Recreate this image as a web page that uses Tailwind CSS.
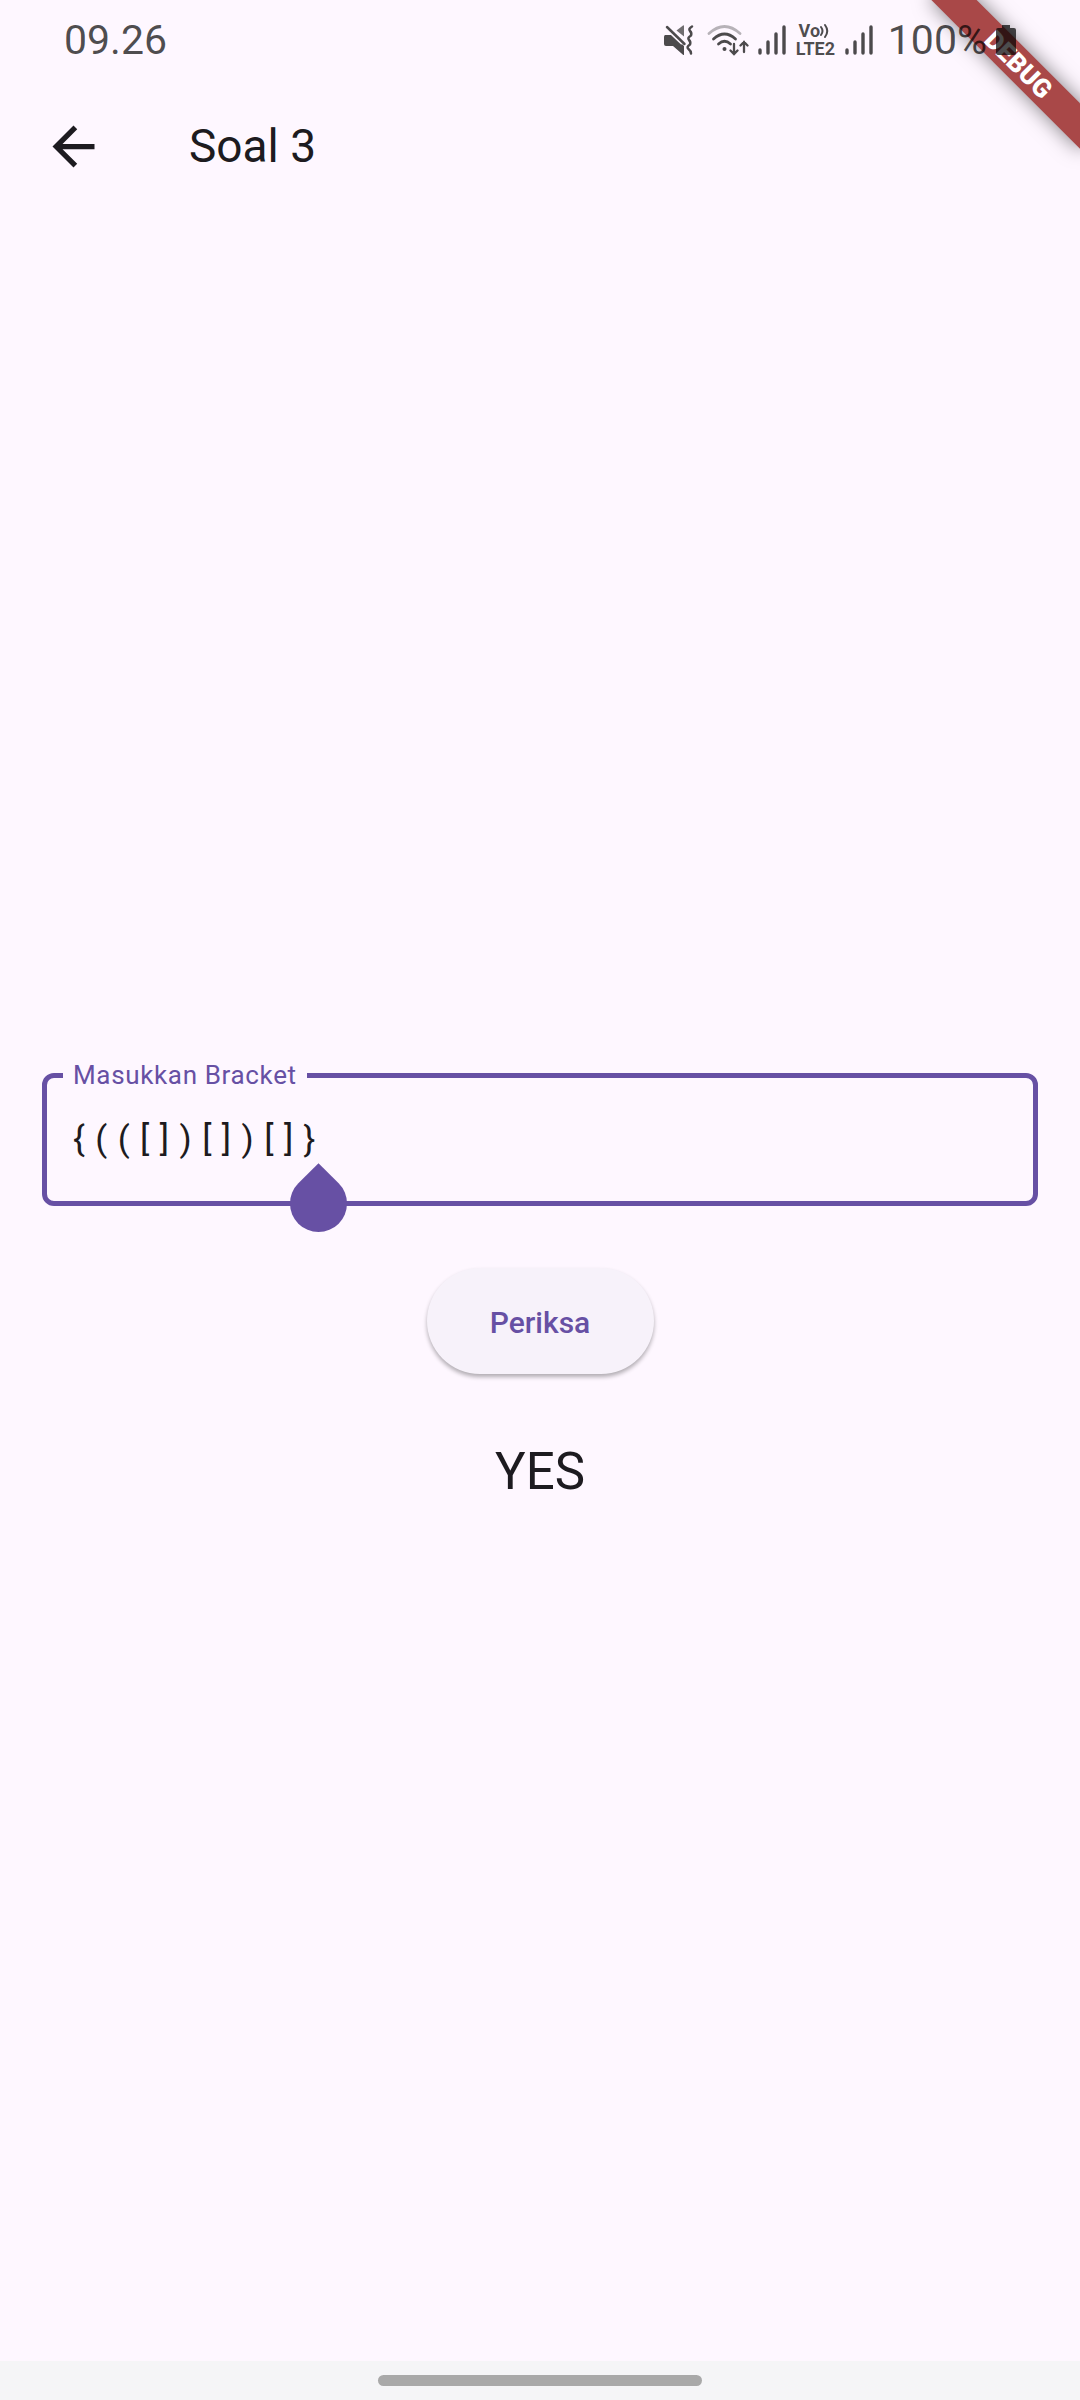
<!DOCTYPE html>
<html lang="id">
<head>
<meta charset="utf-8">
<meta name="viewport" content="width=device-width, initial-scale=1">
<title>Soal 3</title>
<script src="https://cdn.jsdelivr.net/npm/@tailwindcss/browser@4"></script>
</head>
<body class="relative flex min-h-screen flex-col overflow-x-hidden bg-[#fef7ff] font-[Roboto,sans-serif] text-[#1d1b20]">

  <!-- Debug ribbon -->
  <div class="absolute top-0 right-0 size-[200px] overflow-hidden">
    <div class="absolute top-[47px] left-[31px] h-8 w-[212px] rotate-45 bg-[#a94848] pl-1 text-center text-[26px] leading-8 font-black text-white shadow-[0_0_20px_rgba(0,0,0,0.5)]">DEBUG</div>
  </div>

  <!-- Status bar -->
  <div class="relative flex h-20 items-center justify-between pr-[63px] pl-16 text-[41px] leading-none text-black/70">
    <time>09.26</time>
    <div class="flex items-center">
      <svg class="mr-3 h-8 w-8" viewBox="0 0 32 32" fill="currentColor" aria-label="Senyap">
        <path d="M2 11h7l12 11v8.500q0 1-1 .3L10 22H3q-2 0-2-2v-7q0-1.500 1-2z"/>
        <path d="M21 2v10.500L13.500 6.500 20 1.500q1-.5 1 .5z" opacity=".8"/>
        <path d="M3.500 3.500 20 19" stroke="#fef7ff" stroke-width="5"/>
        <path d="M4 3 21.500 20" stroke="currentColor" stroke-width="2.500" stroke-linecap="round"/>
        <path d="M29 2.500q-4 2.500-2 4.500t1 4.500q-4 2.500-2 4.500t1 4.500q-4 2.500-1.500 4.500t2.500 4.500" fill="none" stroke="currentColor" stroke-width="2.500" stroke-linecap="round"/>
      </svg>
      <svg class="mr-2 h-8 w-[42px]" viewBox="0 0 42 32" fill="none" stroke="currentColor" stroke-width="2.800" stroke-linecap="round" aria-label="Wi-Fi">
        <path d="M2 9.500Q17.500-4.500 33 9.500" opacity=".4"/>
        <path d="M6.500 15q11-10 22 0M11.500 20q6-5.500 12 0"/>
        <circle cx="17.500" cy="25" r="2" fill="currentColor" stroke="none"/>
        <path d="M27 20v10M23.500 26.500 27 30l3.500-3.500M37 28V18M33.500 21.500 37 18l3.500 3.500" stroke-width="2.300"/>
      </svg>
      <svg class="mr-2 h-8 w-[30px]" viewBox="0 0 30 32" stroke="currentColor" stroke-width="3.400" stroke-linecap="round" aria-label="Sinyal">
        <path d="M3 26v3M11 18v11M19 10v19M27 3v26"/>
      </svg>
      <div class="mr-2 w-[41px] text-center text-[18px] leading-[18px] font-bold">
        <div class="flex justify-center">Vo<svg class="h-4 w-3" viewBox="0 0 12 16" fill="none" stroke="currentColor" stroke-width="2" stroke-linecap="round"><path d="M1 5q3 4 0 8M5 3q4.500 6 0 12"/></svg></div>
        <div>LTE2</div>
      </div>
      <svg class="mr-[14px] h-8 w-[30px]" viewBox="0 0 30 32" stroke="currentColor" stroke-width="3.400" stroke-linecap="round" aria-label="Sinyal">
        <path d="M3 26v3M11 18v11M19 10v19M27 3v26"/>
      </svg>
      <span class="mr-2">100%</span>
      <svg class="h-8 w-[22px]" viewBox="0 0 22 32" fill="currentColor" aria-label="Baterai">
        <path d="M7 1h8v3h4q2 0 2 2v23q0 2-2 2H3q-2 0-2-2V6q0-2 2-2h4z"/>
      </svg>
    </div>
  </div>

  <!-- App bar -->
  <header class="flex h-[132px] items-center pl-[42px]">
    <button type="button" aria-label="Kembali" class="mr-[84px] flex h-[63px] w-[63px] items-center justify-center">
      <svg class="size-[63px]" viewBox="0 0 24 24" fill="currentColor"><path d="M20 11H7.830l5.590-5.590L12 4l-8 8 8 8 1.410-1.410L7.830 13H20v-2z"/></svg>
    </button>
    <h1 class="text-[46px] leading-none">Soal 3</h1>
  </header>

  <main class="flex flex-1 flex-col items-center justify-center px-[42px]">
    <div class="relative w-full">
      <fieldset class="rounded-xl border-[5px] border-[#6750a4] px-4">
        <legend class="h-7 px-[10px] text-[26px] leading-7 tracking-wide text-[#6750a4]"><label for="bracket">Masukkan Bracket</label></legend>
        <input id="bracket" type="text" value="{ ( ( [ ] ) [ ] ) [ ] }" class="h-28 w-full bg-transparent px-[10px] pb-3 text-[35px] tracking-wide outline-none">
      </fieldset>
      <!-- Caret drag handle -->
      <div class="absolute -bottom-[26px] left-[248px] size-[57px] rotate-45 rounded-full rounded-tl-none bg-[#6750a4]"></div>
    </div>
    <button type="button" class="mt-[62px] h-[106px] w-[227px] rounded-full bg-[#f7f2fa] pt-[2px] text-[30px] font-medium text-[#6750a4] shadow-[0_3px_4px_rgba(0,0,0,0.3)]">Periksa</button>
    <output for="bracket" class="mt-[58px] text-[51px] leading-[80px]">YES</output>
  </main>

  <!-- Gesture bar -->
  <div class="flex h-[39px] items-center justify-center bg-[#f5f5f7]">
    <div class="h-[11px] w-[30%] rounded-full bg-[#a9a9a9]"></div>
  </div>
</body>
</html>
